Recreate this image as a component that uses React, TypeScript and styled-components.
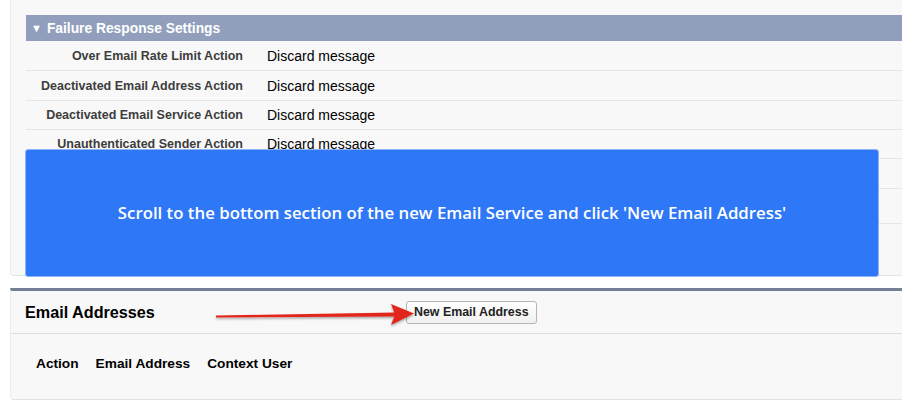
import styled, { createGlobalStyle } from 'styled-components';

const GlobalStyle = createGlobalStyle`
  html, body {
    margin: 0;
    padding: 0;
    background: #ffffff;
    overflow: hidden;
  }
  body {
    font-family: "Liberation Sans", Arial, sans-serif;
  }
`;

const Page = styled.div`
  width: 902px;
  height: 414px;
  position: relative;
  overflow: hidden;
`;

const Panel = styled.div`
  position: relative;
  margin-left: 10px;
  width: 910px;
  height: 276px;
  box-sizing: border-box;
  padding: 15px 0 0 15px;
  background: #f8f8f8;
  border-left: 1px solid #ececec;
  border-bottom: 1px solid #e6e6e6;
  border-bottom-left-radius: 4px;
`;

const SectionHeader = styled.div`
  height: 26px;
  display: flex;
  align-items: center;
  padding-left: 5px;
  background: #919fbd;
  color: #ffffff;
  font-size: 13.8px;
  font-weight: bold;
  gap: 5px;
`;

const Caret = styled.span`
  font-size: 11px;
`;

const Row = styled.div<{ $h: number }>`
  display: grid;
  grid-template-columns: 227px 1fr;
  height: ${p => p.$h}px;
  border-bottom: 1px solid #e6e6e6;
  box-sizing: border-box;
  align-items: center;
`;

const Label = styled.div`
  text-align: right;
  padding-right: 10px;
  font-size: 12.5px;
  font-weight: bold;
  color: #3d3d3d;
`;

const Value = styled.div`
  padding-left: 14px;
  font-size: 14px;
  color: #000000;
`;

const Callout = styled.div`
  position: absolute;
  left: 14px;
  top: 149px;
  width: 854px;
  height: 128px;
  box-sizing: border-box;
  background: #2e77f7;
  border: 1px solid #8fb4f8;
  border-radius: 3px;
  display: flex;
  align-items: center;
  justify-content: center;
  color: #ffffff;
  font-family: "Open Sans", sans-serif;
  font-weight: 600;
  font-size: 16.8px;
  padding-bottom: 2px;
`;

const AddressPanel = styled.div`
  position: relative;
  margin: 12px 0 0 10px;
  width: 910px;
  height: 112px;
  box-sizing: border-box;
  background: #f8f8f8;
  border-top: 3px solid #757e96;
  border-left: 1px solid #ececec;
  border-bottom: 1px solid #e3e3e3;
  border-bottom-left-radius: 4px;
`;

const PanelHeader = styled.div`
  height: 43px;
  box-sizing: border-box;
  display: flex;
  align-items: center;
  padding-left: 14px;
  border-bottom: 1px solid #dedede;
`;

const PanelTitle = styled.h2`
  margin: 0;
  width: 381px;
  font-size: 16.2px;
  font-weight: bold;
  color: #000000;
`;

const Button = styled.button`
  height: 23px;
  padding: 0 7px;
  box-sizing: border-box;
  font-family: "Liberation Sans", Arial, sans-serif;
  font-size: 12.4px;
  font-weight: bold;
  color: #222222;
  background: linear-gradient(#ffffff, #f0f0f0);
  border: 1px solid #b5b5b5;
  border-radius: 3px;
`;

const Columns = styled.div`
  display: flex;
  gap: 17px;
  padding: 22px 0 0 25px;
  font-size: 13.7px;
  font-weight: bold;
  color: #000000;
`;

const Arrow = styled.svg`
  position: absolute;
  left: 195px;
  top: 9px;
  overflow: visible;
`;

const rows = [
  { label: 'Over Email Rate Limit Action', value: 'Discard message', h: 30 },
  { label: 'Deactivated Email Address Action', value: 'Discard message', h: 30 },
  { label: 'Deactivated Email Service Action', value: 'Discard message', h: 29 },
  { label: 'Unauthenticated Sender Action', value: 'Discard message', h: 29 },
  { label: '', value: '', h: 30 },
  { label: '', value: '', h: 35 },
];

export default function App() {
  return (
    <Page>
      <GlobalStyle />
      <Panel>
        <SectionHeader>
          <Caret>▼</Caret>Failure Response Settings
        </SectionHeader>
        {rows.map((r, i) => (
          <Row key={i} $h={r.h}>
            <Label>{r.label}</Label>
            <Value>{r.value}</Value>
          </Row>
        ))}
        <Callout>
          Scroll to the bottom section of the new Email Service and click 'New Email Address'
        </Callout>
      </Panel>
      <AddressPanel>
        <PanelHeader>
          <PanelTitle>Email Addresses</PanelTitle>
          <Button>New Email Address</Button>
        </PanelHeader>
        <Columns>
          <span>Action</span>
          <span>Email Address</span>
          <span>Context User</span>
        </Columns>
        <Arrow width="210" height="30" viewBox="0 0 210 30">
          <defs>
            <filter id="sh" x="-10%" y="-50%" width="120%" height="200%">
              <feDropShadow dx="0" dy="1.5" stdDeviation="1" floodColor="#000" floodOpacity="0.35" />
            </filter>
          </defs>
          <g filter="url(#sh)">
            <path d="M10 15.6 L190 12.4 L190 16.4 L10 17.4 Z" fill="#e2271c" />
            <path d="M185 4 L208 13.6 L185 25 L189 14.4 Z" fill="#e2271c" />
          </g>
        </Arrow>
      </AddressPanel>
    </Page>
  );
}
